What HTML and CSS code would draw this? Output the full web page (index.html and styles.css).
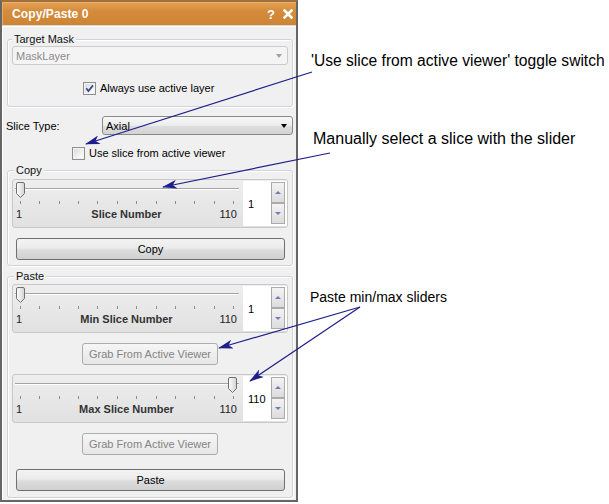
FILE: index.html
```html
<!DOCTYPE html>
<html>
<head>
<meta charset="utf-8">
<link rel="stylesheet" href="styles.css">
</head>
<body>
<div class="page">
  <div class="window">
    <div class="titlebar">
      <span class="title">Copy/Paste 0</span>
      <span class="tb-icons">
        <span class="help">?</span>
        <svg class="close" width="10" height="10" viewBox="0 0 10 10"><path d="M1.5 1.5 L8.5 8.5 M8.5 1.5 L1.5 8.5" stroke="#fff" stroke-width="2.6" stroke-linecap="square"/></svg>
      </span>
    </div>
    <div class="content">
      <div class="group target">
        <div class="group-title">Target Mask</div>
        <div class="combo disabled"><span>MaskLayer</span><span class="arrow"></span></div>
        <div class="check-row always">
          <span class="checkbox"><svg width="11" height="11" viewBox="0 0 11 11"><path d="M2.2 5.2 L4.4 8 L9 2.4" fill="none" stroke="#3a4d8a" stroke-width="1.8"/></svg></span>
          <span>Always use active layer</span>
        </div>
      </div>

      <div class="slice-type">
        <span class="lbl">Slice Type:</span>
        <div class="combo enabled"><span>Axial</span><span class="arrow"></span></div>
      </div>

      <div class="check-row use-slice">
        <span class="checkbox"></span>
        <span>Use slice from active viewer</span>
      </div>

      <div class="group copy">
        <div class="group-title">Copy</div>
        <div class="slider">
          <div class="slider-main">
            <div class="track-area">
              <div class="track"></div>
              <svg class="handle" style="left:3px" width="9" height="16" viewBox="0 0 9 16"><defs><linearGradient id="hg1" x1="0" y1="0" x2="1" y2="0"><stop offset="0" stop-color="#ffffff"/><stop offset="1" stop-color="#d2d2d2"/></linearGradient></defs><path d="M0.5 2 Q0.5 0.5 2 0.5 H7 Q8.5 0.5 8.5 2 V11.5 L4.5 15.5 L0.5 11.5 Z" fill="url(#hg1)" stroke="#707070"/></svg>
            </div>
            <div class="ticks"><i></i><i></i><i></i><i></i><i></i><i></i><i></i><i></i><i></i><i></i><i></i><i></i></div>
            <div class="scale"><span>1</span><b>Slice Number</b><span class="max">110</span></div>
          </div>
          <div class="spin"><span class="val">1</span><div class="spin-btns"><span class="sb"><i class="up"></i></span><span class="sb"><i class="down"></i></span></div></div>
        </div>
        <button class="btn wide">Copy</button>
      </div>

      <div class="group paste">
        <div class="group-title">Paste</div>
        <div class="slider">
          <div class="slider-main">
            <div class="track-area">
              <div class="track"></div>
              <svg class="handle" style="left:3px" width="9" height="16" viewBox="0 0 9 16"><path d="M0.5 2 Q0.5 0.5 2 0.5 H7 Q8.5 0.5 8.5 2 V11.5 L4.5 15.5 L0.5 11.5 Z" fill="url(#hg1)" stroke="#707070"/></svg>
            </div>
            <div class="ticks"><i></i><i></i><i></i><i></i><i></i><i></i><i></i><i></i><i></i><i></i><i></i><i></i></div>
            <div class="scale"><span>1</span><b>Min Slice Number</b><span class="max">110</span></div>
          </div>
          <div class="spin"><span class="val">1</span><div class="spin-btns"><span class="sb"><i class="up"></i></span><span class="sb"><i class="down"></i></span></div></div>
        </div>
        <button class="btn grab" disabled>Grab From Active Viewer</button>
        <div class="slider max-slider">
          <div class="slider-main">
            <div class="track-area">
              <div class="track"></div>
              <svg class="handle" style="left:215px" width="9" height="16" viewBox="0 0 9 16"><path d="M0.5 2 Q0.5 0.5 2 0.5 H7 Q8.5 0.5 8.5 2 V11.5 L4.5 15.5 L0.5 11.5 Z" fill="url(#hg1)" stroke="#707070"/></svg>
            </div>
            <div class="ticks"><i></i><i></i><i></i><i></i><i></i><i></i><i></i><i></i><i></i><i></i><i></i><i></i></div>
            <div class="scale"><span>1</span><b>Max Slice Number</b><span class="max">110</span></div>
          </div>
          <div class="spin"><span class="val">110</span><div class="spin-btns"><span class="sb"><i class="up"></i></span><span class="sb"><i class="down"></i></span></div></div>
        </div>
        <button class="btn grab grab2" disabled>Grab From Active Viewer</button>
        <button class="btn wide paste-btn">Paste</button>
      </div>
    </div>
  </div>

  <div class="notes">
    <div class="n1">'Use slice from active viewer' toggle switch</div>
    <div class="n2">Manually select a slice with the slider</div>
    <div class="n3">Paste min/max sliders</div>
  </div>

  <svg class="arrows" width="609" height="504" viewBox="0 0 609 504">
    <defs>
      <marker id="ah" markerWidth="15" markerHeight="9" refX="14" refY="4.5" orient="auto" markerUnits="userSpaceOnUse">
        <path d="M0 0 L15 4.5 L0 9 L4 4.5 Z" fill="#1e1e8c"/>
      </marker>
    </defs>
    <g stroke="#1e1e8c" stroke-width="1.2" fill="none">
      <line x1="312" y1="72" x2="86" y2="144" marker-end="url(#ah)"/>
      <line x1="330" y1="153" x2="163" y2="187" marker-end="url(#ah)"/>
      <line x1="360" y1="307" x2="219" y2="348" marker-end="url(#ah)"/>
      <line x1="360" y1="307" x2="250" y2="381" marker-end="url(#ah)"/>
    </g>
  </svg>
</div>
</body>
</html>
```

FILE: styles.css
```css
html, body {
  margin: 0;
  padding: 0;
  background: #ffffff;
}

body {
  font-family: "Liberation Sans", Arial, sans-serif;
  font-size: 11px;
  color: #000;
}

.page {
  position: relative;
  width: 609px;
  height: 504px;
  display: flex;
  align-items: flex-start;
  overflow: hidden;
}

/* ---------- window ---------- */
.window {
  width: 298px;
  height: 502px;
  box-sizing: border-box;
  border: 2px solid #666666;
  border-top: 2px solid #9e7040;
  background: #f0f0f0;
  display: flex;
  flex-direction: column;
  flex: none;
}

.titlebar {
  height: 24px;
  flex: none;
  background: linear-gradient(#e3a252, #d48b3b 40%, #cd8433);
  box-shadow: inset 0 1px 0 #eeb46c, inset 1px 0 0 #e9ac62;
  display: flex;
  align-items: center;
  justify-content: space-between;
  padding: 0 3px 0 10px;
  color: #fff;
  font-weight: bold;
  font-size: 12px;
}

.title {
  letter-spacing: 0.1px;
}

.tb-icons {
  display: flex;
  align-items: center;
  gap: 8px;
}

.help {
  font-size: 13px;
  font-weight: bold;
  line-height: 13px;
}

.close {
  display: block;
}

.content {
  flex: 1;
  padding: 0 3px 0 5px;
  box-shadow: inset 1px 1px 0 #ffffff;
  border-top: 1px solid #d9d9d9;
  margin-top: -1px;
  display: flex;
  flex-direction: column;
}

/* ---------- group boxes ---------- */
.group {
  border: 1px solid #d0d4d8;
  border-radius: 3px;
  box-shadow: inset 1px 1px 0 #ffffff, 1px 1px 0 #ffffff;
  padding: 0 4px;
  display: flex;
  flex-direction: column;
}

.group-title {
  align-self: flex-start;
  height: 11px;
  line-height: 11px;
  margin-top: -6px;
  padding: 0 2px;
  background: #f0f0f0;
  color: #111;
}

.target {
  margin-top: 13px;
  padding-bottom: 11px;
}

.copy .group-title,
.paste .group-title {
  margin-left: 2px;
}

.copy {
  margin-top: 10px;
  padding-bottom: 5px;
}

.paste {
  margin-top: 10px;
  padding-bottom: 6px;
}

/* ---------- combo boxes ---------- */
.combo {
  height: 19px;
  box-sizing: border-box;
  border-radius: 3px;
  display: flex;
  align-items: center;
  justify-content: space-between;
  padding: 0 5px 0 3px;
}

.combo.disabled {
  margin-top: 1px;
  border: 1px solid #cbcbcb;
  background: #f4f4f4;
  color: #8b8b8b;
}

.combo.disabled .arrow {
  border-left: 3.5px solid transparent;
  border-right: 3.5px solid transparent;
  border-top: 4px solid #a2a2a2;
}

.combo.enabled {
  flex: 1;
  border: 1px solid #8a8a8a;
  background: linear-gradient(#f7f7f7, #ececec 50%, #dedede 51%, #d3d3d3);
  color: #000;
}

.combo.enabled .arrow {
  border-left: 3.5px solid transparent;
  border-right: 3.5px solid transparent;
  border-top: 4px solid #000;
}

.slice-type {
  margin-top: 9px;
  margin-left: -1px;
  display: flex;
  align-items: center;
}

.slice-type .lbl {
  flex: 0 0 96px;
}

/* ---------- checkboxes ---------- */
.check-row {
  height: 13px;
  display: flex;
  align-items: center;
  gap: 4px;
  line-height: 13px;
}

.always {
  margin-top: 17px;
  padding-left: 71px;
}

.use-slice {
  margin-top: 12px;
  margin-left: 65px;
}

.checkbox {
  width: 13px;
  height: 13px;
  box-sizing: border-box;
  border: 1px solid #8e8f8f;
  background: linear-gradient(135deg, #d8d8d8, #f6f6f6 70%, #ffffff);
  box-shadow: inset 0 0 0 1px #f2f2f2;
  display: flex;
  align-items: center;
  justify-content: center;
  flex: none;
}

.checkbox svg {
  display: block;
}

/* ---------- sliders ---------- */
.slider {
  height: 49px;
  box-sizing: border-box;
  border: 1px solid #c8c8c8;
  border-radius: 3px;
  background: linear-gradient(#eeeeee, #e1e1e1);
  display: flex;
  margin-top: 3px;
}

.paste .slider {
  margin-top: 2px;
}

.paste .max-slider {
  margin-top: 9px;
}

.slider-main {
  width: 230px;
  flex: none;
  display: flex;
  flex-direction: column;
}

.track-area {
  position: relative;
  height: 21px;
  box-sizing: border-box;
  padding-top: 8px;
}

.track {
  margin-left: 2px;
  width: 224px;
  height: 1px;
  background: #a4a4a4;
  border-bottom: 1px solid #ffffff;
}

.handle {
  position: absolute;
  top: 2px;
  display: block;
}

.ticks {
  height: 3px;
  margin-left: 7px;
  width: 214px;
  display: flex;
  justify-content: space-between;
}

.ticks i {
  width: 1px;
  height: 3px;
  background: #8c8c8c;
}

.scale {
  margin-top: 4px;
  line-height: 13px;
  padding: 0 6px 0 3px;
  display: grid;
  grid-template-columns: 1fr auto 1fr;
  color: #222;
}

.scale b {
  color: #333;
}

.scale .max {
  justify-self: end;
}

.spin {
  flex: 1;
  margin: 1px 0;
  background: #ffffff;
  display: flex;
  align-items: center;
}

.spin .val {
  flex: 1;
  padding-left: 5px;
}

.spin-btns {
  align-self: stretch;
  width: 14px;
  margin: 1px 2px 2px 0;
  display: flex;
  flex-direction: column;
}

.sb {
  flex: 1;
  box-sizing: border-box;
  border: 1px solid #ababab;
  background: linear-gradient(#f3f3f3, #dcdcdc);
  display: flex;
  align-items: center;
  justify-content: center;
}

.sb i.up {
  border-left: 3px solid transparent;
  border-right: 3px solid transparent;
  border-bottom: 3px solid #6a7db4;
}

.sb i.down {
  border-left: 3px solid transparent;
  border-right: 3px solid transparent;
  border-top: 3px solid #6a7db4;
}

/* ---------- buttons ---------- */
.btn {
  height: 22px;
  box-sizing: border-box;
  border: 1px solid #707070;
  border-radius: 3px;
  background: linear-gradient(#f3f3f3, #ebebeb 45%, #dddddd 55%, #d0d0d0);
  font-family: "Liberation Sans", Arial, sans-serif;
  font-size: 11px;
  color: #000;
  padding: 0;
  margin: 0;
}

.btn.wide {
  margin: 10px 3px 0 4px;
}

.btn.paste-btn {
  margin-top: 14px;
}

.btn.grab {
  align-self: center;
  width: 136px;
  margin-top: 10px;
  border-color: #a9adb0;
  background: linear-gradient(#f6f6f6, #e6e6e6);
  color: #848484;
}

/* ---------- annotations ---------- */
.notes {
  flex: 1;
  display: flex;
  flex-direction: column;
  font-family: "Liberation Sans", Arial, sans-serif;
  white-space: nowrap;
  color: #000;
}

.n1 {
  font-size: 15.6px;
  line-height: 18px;
  margin: 52px 0 0 13px;
}

.n2 {
  font-size: 16px;
  line-height: 18px;
  margin: 60px 0 0 15px;
}

.n3 {
  font-size: 14px;
  line-height: 16px;
  margin: 141px 0 0 12px;
}

.arrows {
  position: absolute;
  top: 0;
  left: 0;
  pointer-events: none;
}
```
